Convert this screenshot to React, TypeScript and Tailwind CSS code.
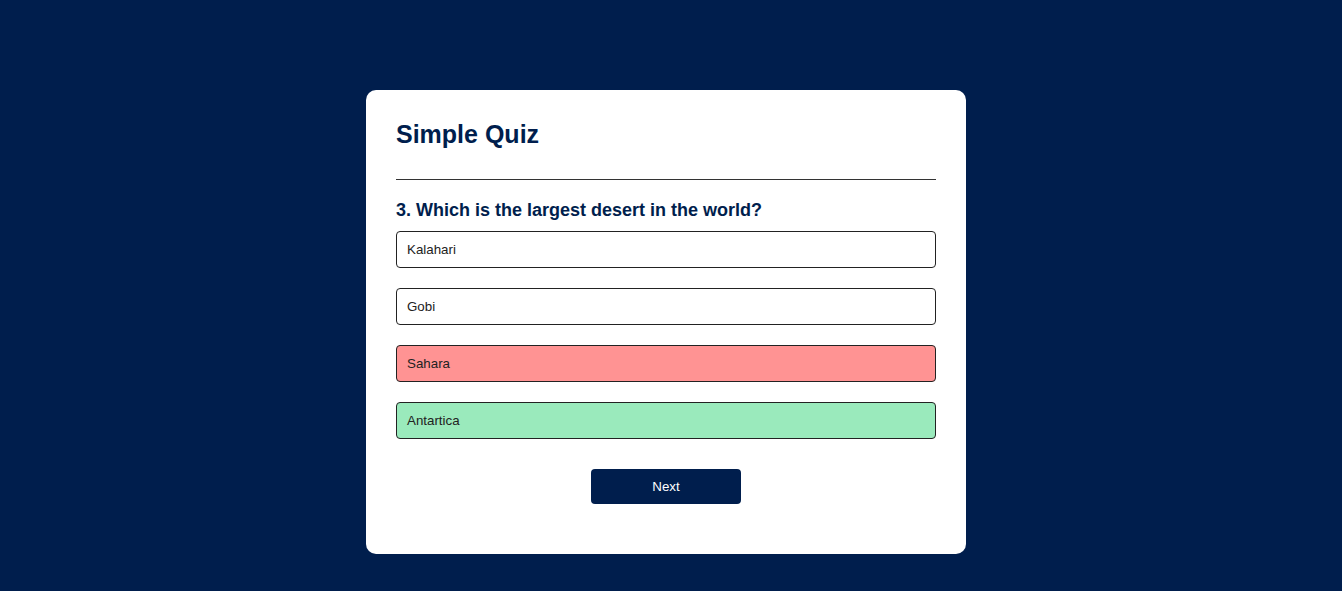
const ANSWERS = [
  { text: "Kalahari", state: "" },
  { text: "Gobi", state: "" },
  { text: "Sahara", state: "incorrect" },
  { text: "Antartica", state: "correct" },
];

export default function App() {
  return (
    <div className="min-h-[591px] bg-[#001e4d] pt-[90px] pr-[10px] font-['Liberation_Sans',Arial,sans-serif]">
      <div className="mx-auto w-[600px] rounded-[10px] bg-white p-[30px]">
        <h1 className="border-b border-[#333] pb-[30px] text-[25px] leading-[29px] font-semibold text-[#001e4d]">
          Simple Quiz
        </h1>

        <div className="py-[20px]">
          <h2 className="text-[18px] leading-[21px] font-semibold text-[#001e4d]">
            3. Which is the largest desert in the world?
          </h2>
          <div className="flex flex-col">
            {ANSWERS.map((a) => (
              <button
                key={a.text}
                className={
                  "my-[10px] w-full rounded-[4px] border border-[#222] p-[10px] text-left text-[13.333px] leading-[15px] text-[#222] " +
                  (a.state === "correct"
                    ? "bg-[#9aeabc]"
                    : a.state === "incorrect"
                      ? "bg-[#ff9393]"
                      : "bg-white")
                }
              >
                {a.text}
              </button>
            ))}
          </div>
          <button className="mx-auto mt-[20px] block w-[150px] rounded-[4px] bg-[#001e4d] p-[10px] text-[13.333px] leading-[15px] font-medium text-white">
            Next
          </button>
        </div>
      </div>
    </div>
  );
}
